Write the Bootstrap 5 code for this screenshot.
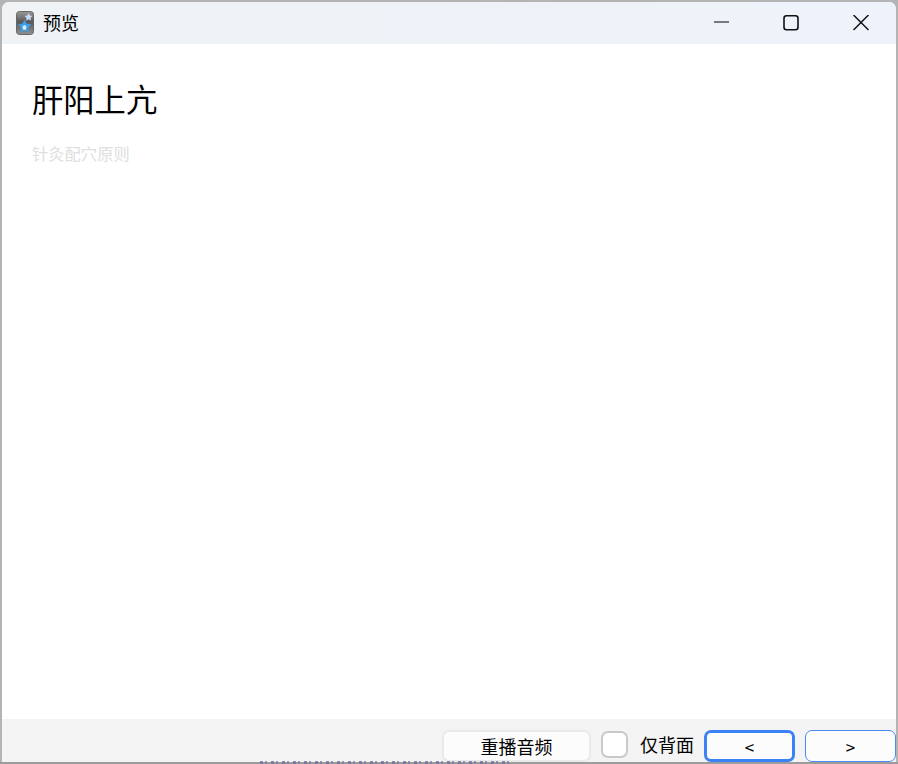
<!DOCTYPE html>
<html lang="zh">
<head>
<meta charset="utf-8">
<title>预览</title>
<link href="https://cdn.jsdelivr.net/npm/bootstrap@5.3.0/dist/css/bootstrap.min.css" rel="stylesheet">
<style>
html,body{height:100%;margin:0;overflow:hidden}
body{background:#b4b4b4;font-family:"Noto Sans CJK SC","Liberation Sans",sans-serif;color:#000}
.win-frame{width:898px;height:764px;padding:2px 2px 0 2px;border-bottom:2px solid #9c9c9c;position:relative}
.win-inner{height:100%;background:#fff;border-radius:7px 7px 0 0;overflow:hidden}
.win-title{height:42px;background:linear-gradient(90deg,#eff3f6,#eef2fa);flex:none}
.win-logo{width:18px;height:24px;margin-left:14px;margin-top:-1px}
.win-name{font-size:18px;line-height:24px;margin-left:9px;margin-top:-2px}
.win-ctl{width:70px;height:42px;padding:0;border:0;background:transparent}
.win-body{padding:35px 30px 0}
.card-word{font-size:31.3px;line-height:40px;font-weight:400;margin:0}
.card-tag{font-size:16.3px;line-height:24px;color:#e0dede;margin-top:22px}
.win-foot{height:43px;background:#f4f4f4;flex:none;padding:11px 0 0 0;gap:10px}
.foot-btn{height:32px;background:#fcfcfc;border:2px solid #eaeaea;border-radius:7px;font-size:18px;line-height:1;padding:0;color:#000}
.foot-wide{width:149px}
.foot-nav{width:91px;border:1.5px solid #4a8af4;font-size:17px}
.foot-nav.is-focus{border:3px solid #3b82f6}
.foot-check{width:27px;height:27px;background:#fff;border:2px solid #c9c9c9;border-radius:7px;margin:1px 0 0 0;appearance:none;flex:none}
.foot-label{font-size:18px;line-height:28px;margin:0 0 3px 2px;padding:0}
.peek-text{position:absolute;left:260px;bottom:-2px;width:250px;height:3px;background:repeating-linear-gradient(90deg,#6b6b9c 0 3px,transparent 3px 5px,#7a7aa8 5px 7px,transparent 7px 11px);opacity:.75}
</style>
</head>
<body>
<div class="win-frame">
<div class="win-inner d-flex flex-column">
  <div class="win-title d-flex align-items-center">
    <svg class="win-logo" viewBox="0 0 18 24" aria-hidden="true">
      <defs><linearGradient id="lg" x1="0" y1="0" x2="0" y2="1"><stop offset="0" stop-color="#9a9a9a"/><stop offset=".45" stop-color="#585858"/><stop offset="1" stop-color="#909090"/></linearGradient></defs>
      <rect x=".5" y=".5" width="17" height="23" rx="3" fill="url(#lg)" stroke="#666"/>
      <path d="M12.500 2l1.300 2.500 2.700.4-2 1.900.5 2.700-2.500-1.300-2.400 1.300.4-2.700-1.900-1.900 2.700-.4z" fill="#c8dcf5"/>
      <path d="M8.500 8.500l2.300 4.300 4.700.7-3.400 3.300.8 4.700-4.400-2.200-4.200 2.200.8-4.700-3.400-3.300 4.700-.7z" fill="#3f9ee8"/>
      <path d="M8.500 14l2 1.300-.4 3-1.600.6-1.600-.6-.4-3z" fill="#d3eafc"/>
    </svg>
    <span class="win-name">预览</span>
    <div class="ms-auto d-flex">
      <button class="win-ctl d-flex align-items-center justify-content-center" type="button" aria-label="最小化">
        <svg width="16" height="16" viewBox="0 0 16 16"><path d="M1 7h15" stroke="#000" stroke-width="1"/></svg>
      </button>
      <button class="win-ctl d-flex align-items-center justify-content-center" type="button" aria-label="最大化">
        <svg width="16" height="16" viewBox="0 0 16 16"><rect x="1" y=".8" width="14" height="14" rx="2.500" fill="none" stroke="#111" stroke-width="1.600"/></svg>
      </button>
      <button class="win-ctl d-flex align-items-center justify-content-center" type="button" aria-label="关闭">
        <svg width="16" height="16" viewBox="0 0 16 16"><path d="M.5 0l15 15M15.500 0l-15 15" stroke="#111" stroke-width="1.500"/></svg>
      </button>
    </div>
  </div>
  <div class="win-body flex-grow-1">
    <h1 class="card-word">肝阳上亢</h1>
    <div class="card-tag">针灸配穴原则</div>
  </div>
  <div class="win-foot d-flex justify-content-end align-items-start">
    <button class="btn foot-btn foot-wide" type="button">重播音频</button>
    <input class="foot-check" type="checkbox" id="backonly" aria-label="仅背面">
    <label class="foot-label" for="backonly">仅背面</label>
    <button class="btn foot-btn foot-nav is-focus" type="button">&lt;</button>
    <button class="btn foot-btn foot-nav" type="button">&gt;</button>
  </div>
</div>
<div class="peek-text" aria-hidden="true"></div>
</div>
<script src="https://cdn.jsdelivr.net/npm/bootstrap@5.3.0/dist/js/bootstrap.bundle.min.js"></script>
</body>
</html>
